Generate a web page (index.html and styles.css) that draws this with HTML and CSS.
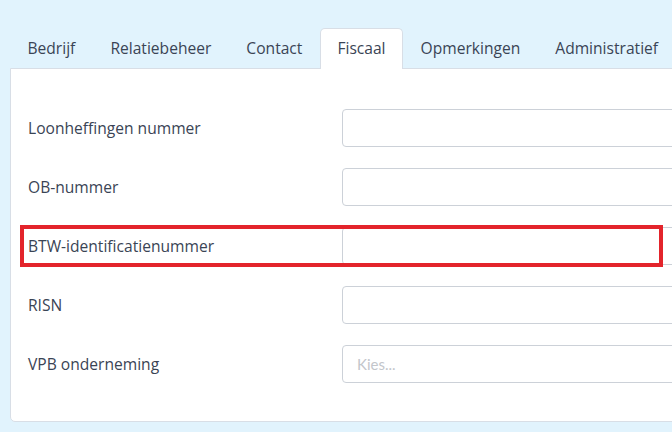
FILE: index.html
```html
<!DOCTYPE html>
<html lang="nl">
<head>
<meta charset="utf-8">
<title>Fiscaal</title>
<link rel="stylesheet" href="styles.css">
</head>
<body>
<div class="page">
  <nav class="tabs">
    <a class="tab">Bedrijf</a>
    <a class="tab">Relatiebeheer</a>
    <a class="tab">Contact</a>
    <a class="tab active">Fiscaal</a>
    <a class="tab">Opmerkingen</a>
    <a class="tab">Administratief</a>
  </nav>
  <section class="panel">
    <div class="row">
      <label class="label">Loonheffingen nummer</label>
      <div class="input"></div>
    </div>
    <div class="row">
      <label class="label">OB-nummer</label>
      <div class="input"></div>
    </div>
    <div class="row highlighted">
      <label class="label">BTW-identificatienummer</label>
      <div class="input"></div>
      <span class="highlight"></span>
    </div>
    <div class="row">
      <label class="label">RISN</label>
      <div class="input"></div>
    </div>
    <div class="row">
      <label class="label">VPB onderneming</label>
      <div class="input select"><span class="placeholder">Kies...</span></div>
    </div>
  </section>
</div>
</body>
</html>
```

FILE: styles.css
```css
html, body {
  margin: 0;
  padding: 0;
  background: #e1f3fd;
  overflow: hidden;
  width: 672px;
  height: 432px;
}
body {
  font-family: "Open Sans", "Liberation Sans", sans-serif;
  color: #3a4455;
}
.page {
  padding: 28px 0 0 10px;
  width: 760px;
}
.tabs {
  display: flex;
  height: 40px;
}
.tab {
  display: flex;
  align-items: center;
  padding: 0 16.5px 2px 16.5px;
  font-size: 15.6px;
  font-weight: 500;
  color: #3a4455;
  border: 1px solid transparent;
  border-bottom: none;
  border-radius: 5px 5px 0 0;
}
.tab.active {
  background: #fff;
  border-color: #d8dee6;
  margin-bottom: -1px;
  position: relative;
  z-index: 1;
}
.panel {
  background: #fff;
  border: 1px solid #d8dee6;
  border-radius: 0 0 0 5px;
  padding: 40px 0 38px 17px;
  display: flex;
  flex-direction: column;
  gap: 21px;
}
.row {
  display: flex;
  align-items: center;
  position: relative;
}
.label {
  width: 314px;
  font-size: 15.6px;
  font-weight: 500;
}
.input {
  flex: 1;
  height: 36px;
  border: 1px solid #ccd1d8;
  border-radius: 4px;
  display: flex;
  align-items: center;
}
.placeholder {
  padding-left: 14px;
  font-family: Lato, "Open Sans", sans-serif;
  font-size: 15px;
  color: #c3c6cb;
}
.highlight {
  position: absolute;
  left: -8px;
  top: -2px;
  width: 635px;
  height: 34px;
  border: 4px solid #e3242b;
}
```
